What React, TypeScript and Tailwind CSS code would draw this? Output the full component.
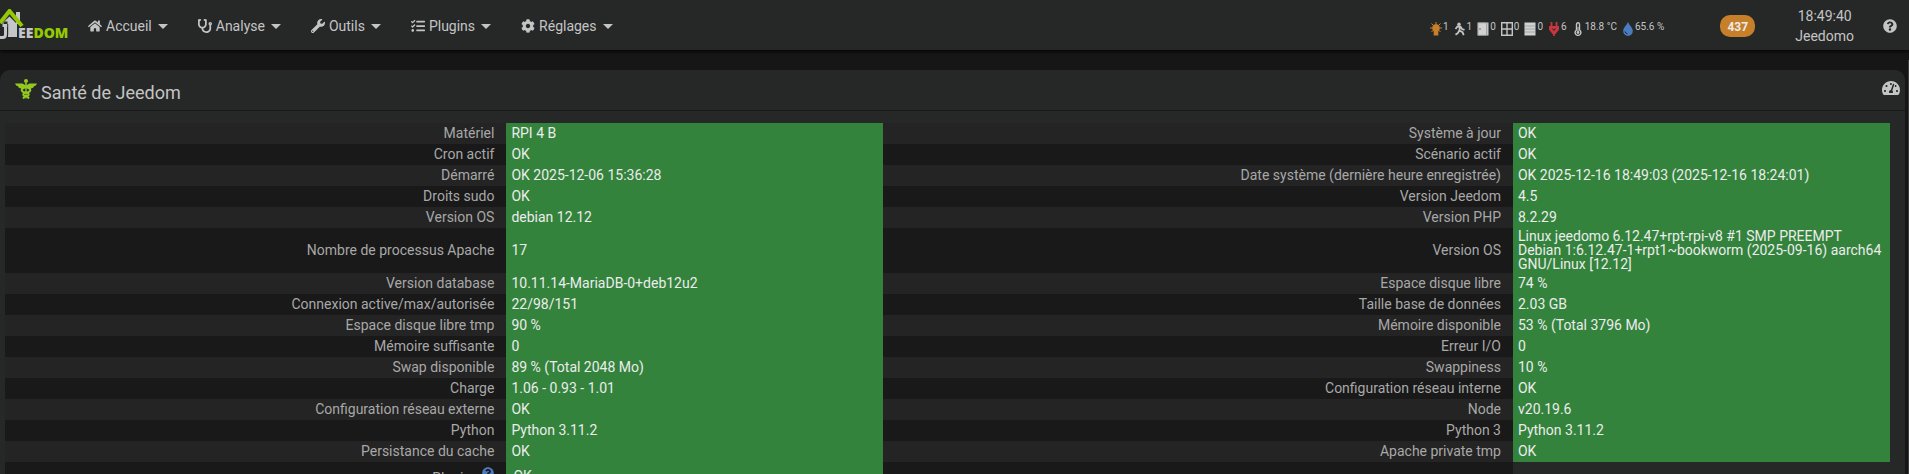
import type { ReactNode } from "react";
import type { IconType } from "react-icons";
import {
  FaCog,
  FaHome,
  FaQuestionCircle,
  FaStethoscope,
  FaTachometerAlt,
  FaTasks,
  FaWrench,
} from "react-icons/fa";

interface HealthItem {
  label: string;
  value: string;
}

const menu: { label: string; icon: IconType }[] = [
  { label: "Accueil", icon: FaHome },
  { label: "Analyse", icon: FaStethoscope },
  { label: "Outils", icon: FaWrench },
  { label: "Plugins", icon: FaTasks },
  { label: "Réglages", icon: FaCog },
];

const healthRows: [HealthItem, HealthItem][] = [
  [
    { label: "Matériel", value: "RPI 4 B" },
    { label: "Système à jour", value: "OK" },
  ],
  [
    { label: "Cron actif", value: "OK" },
    { label: "Scénario actif", value: "OK" },
  ],
  [
    { label: "Démarré", value: "OK 2025-12-06 15:36:28" },
    {
      label: "Date système (dernière heure enregistrée)",
      value: "OK 2025-12-16 18:49:03 (2025-12-16 18:24:01)",
    },
  ],
  [
    { label: "Droits sudo", value: "OK" },
    { label: "Version Jeedom", value: "4.5" },
  ],
  [
    { label: "Version OS", value: "debian 12.12" },
    { label: "Version PHP", value: "8.2.29" },
  ],
  [
    { label: "Nombre de processus Apache", value: "17" },
    {
      label: "Version OS",
      value:
        "Linux jeedomo 6.12.47+rpt-rpi-v8 #1 SMP PREEMPT Debian 1:6.12.47-1+rpt1~bookworm (2025-09-16) aarch64 GNU/Linux [12.12]",
    },
  ],
  [
    { label: "Version database", value: "10.11.14-MariaDB-0+deb12u2" },
    { label: "Espace disque libre", value: "74 %" },
  ],
  [
    { label: "Connexion active/max/autorisée", value: "22/98/151" },
    { label: "Taille base de données", value: "2.03 GB" },
  ],
  [
    { label: "Espace disque libre tmp", value: "90 %" },
    { label: "Mémoire disponible", value: "53 % (Total 3796 Mo)" },
  ],
  [
    { label: "Mémoire suffisante", value: "0" },
    { label: "Erreur I/O", value: "0" },
  ],
  [
    { label: "Swap disponible", value: "89 % (Total 2048 Mo)" },
    { label: "Swappiness", value: "10 %" },
  ],
  [
    { label: "Charge", value: "1.06 - 0.93 - 1.01" },
    { label: "Configuration réseau interne", value: "OK" },
  ],
  [
    { label: "Configuration réseau externe", value: "OK" },
    { label: "Node", value: "v20.19.6" },
  ],
  [
    { label: "Python", value: "Python 3.11.2" },
    { label: "Python 3", value: "Python 3.11.2" },
  ],
  [
    { label: "Persistance du cache", value: "OK" },
    { label: "Apache private tmp", value: "OK" },
  ],
];

function Logo() {
  return (
    <a href="#" aria-label="Jeedom" className="flex h-12 w-[73px] shrink-0 items-center pb-0.5">
      <svg viewBox="0 0 68 32" className="h-8 w-[68px]">
        <path d="M16 3h4v12h-4z" fill="#c4c6c8" />
        <path d="M2.500 14 9.500 7.500 17 15v13H8V18H2.500z" fill="#c4c6c8" />
        <path d="M5.500 15.500v10q0 3-3 3H0" fill="none" stroke="#c4c6c8" strokeWidth="3" />
        <path d="M7.700 15v11" stroke="#2b2d2d" strokeWidth="1" />
        <path d="M3.500 12.500h4v2.500h-4z" fill="#2b2d2d" />
        <path d="M0 14 9.500 2 22 17" fill="none" stroke="#94ca02" strokeWidth="4" />
        <text
          x="18"
          y="29"
          fontFamily="Open Sans"
          fontSize="14"
          fontWeight="800"
          fill="#c4c6c8"
        >
          EE<tspan fill="#94ca02">DOM</tspan>
        </text>
      </svg>
    </a>
  );
}

function Summary({ value, children }: { value: string; children: ReactNode }) {
  return (
    <span className="flex items-start gap-px whitespace-nowrap text-[10px] leading-[10px]">
      <svg viewBox="0 0 12 14" className="h-[14px] w-3">
        {children}
      </svg>
      {value}
    </span>
  );
}

function Summaries() {
  return (
    <div className="mr-[56px] flex items-center gap-[5px] pt-[5px] text-[#c4c4c4]">
      <Summary value="1">
        <path
          d="M6 2a4 4 0 0 1 2.300 7.200V13.500H3.700V9.200A4 4 0 0 1 6 2z"
          fill="#c87f2a"
        />
        <path
          d="M6 0v2M1.500 1.500l2 2M10.500 1.500l-2 2M0 6h2.500M9.500 6H12M1.500 10l2-2M10.500 10l-2-2"
          stroke="#c87f2a"
        />
      </Summary>
      <Summary value="1">
        <circle cx="5" cy="2.300" r="1.700" fill="currentColor" />
        <path
          d="M1.500 7 3.500 4.500l3 .2 1.500 2.300 2.500.8M5.700 5 5.500 8.500l3 1.700 1.200 3M5.300 8.500 4 11l-2.500 1.800"
          fill="none"
          stroke="currentColor"
          strokeWidth="1.800"
        />
      </Summary>
      <Summary value="0">
        <path d="M.5 .5h11v13H.5z" fill="#c4c4c4" />
        <path d="M1 .8h8.500v12.500H1z" fill="#d2d2d2" stroke="#8a8a8a" strokeWidth=".6" />
        <path d="M2 7h2" stroke="#8f5a40" />
      </Summary>
      <Summary value="0">
        <path d="M.7 .7h10.600v12.600H.7zM6 1v12M1 7h10" fill="none" stroke="currentColor" strokeWidth="1.400" />
      </Summary>
      <Summary value="0">
        <path d="M.5 .5h11v13H.5z" fill="#d0d0d0" />
        <path d="M1 4h10M1 7h10M1 10h10" stroke="#999" strokeWidth=".8" />
      </Summary>
      <Summary value="6">
        <path d="M3.500 0v5M8.500 0v5M6 9v5" fill="none" stroke="#c8373b" strokeWidth="1.800" />
        <path d="M1 4h10v3.500L7.500 12h-3L1 7.500z" fill="#c8373b" />
        <path d="M4.500 6.500 6 8.500l1.500-2" fill="none" stroke="#262828" />
      </Summary>
      <Summary value="18.8 °C">
        <path
          d="M4.500 8V2.200a1.500 1.500 0 0 1 3 0V8a2.900 2.900 0 1 1-3 0z"
          fill="none"
          stroke="currentColor"
          strokeWidth="1.400"
        />
        <circle cx="6" cy="10.500" r="1.400" fill="currentColor" />
        <path d="M6 5v5" stroke="currentColor" />
      </Summary>
      <Summary value="65.6 %">
        <path d="M6 0c1 3 4.800 5.500 4.800 9.200a4.800 4.800 0 0 1-9.600 0C1.200 5.500 5 3 6 0z" fill="#4b7cc0" />
        <path d="M3 9.500q.5 2 2.500 2.300" fill="none" stroke="#262828" />
      </Summary>
    </div>
  );
}

function Navbar() {
  return (
    <header className="z-10 flex h-[50px] shrink-0 items-center bg-[#262828] pt-0.5 pr-3 shadow-[0_1px_4px_#000000]">
      <Logo />
      <nav className="flex">
        {menu.map(({ label, icon: Icon }) => (
          <button key={label} type="button" className="flex h-12 items-center px-[15px]">
            <Icon className="h-[14px] w-auto" />
            <span className="ml-1 mr-[6px]">{label}</span>
            <span className="border-x-[5px] border-t-[5px] border-x-transparent" />
          </button>
        ))}
      </nav>
      <div className="ml-auto flex items-center">
        <Summaries />
        <button
          type="button"
          className="mr-[40px] flex h-[22px] w-[35px] items-center justify-center rounded-[10px] bg-[#c87f2a] pt-0.5 text-xs font-bold text-[#ececec]"
        >
          437
        </button>
        <div className="mr-[29px] text-center leading-5">
          <div>18:49:40</div>
          <div>Jeedomo</div>
        </div>
        <button type="button" aria-label="Aide">
          <FaQuestionCircle className="size-[14px]" />
        </button>
      </div>
    </header>
  );
}

function HealthIcon() {
  return (
    <svg viewBox="0 0 22 20" className="mb-0.5 h-5 w-[22px]" fill="#94ca20">
      <circle cx="11" cy="2" r="2" />
      <path d="M0 4.500h7.500L11 6.500l3.500-2H22q-1 2.500-3 2.700-.5 2-2.500 2-1 1.500-3 1L11 9l-2.500 1.200q-2 .5-3-1-2 0-2.500-2Q1 7 0 4.500z" />
      <path d="M10.200 4h1.600l-.3 15.500h-1z" />
      <path
        d="M8 9q-3 3 1 4.200l3.500.8q2.500 1.500 0 2.800l-2.500.7-2 2M14 9q3 3-1 4.200l-3.500.8q-2.500 1.500 0 2.800l2.500.7 2 2"
        fill="none"
        stroke="#94ca20"
        strokeWidth="2"
      />
    </svg>
  );
}

function HealthTable() {
  return (
    <table className="w-full table-fixed border-collapse leading-[14px]">
      <colgroup>
        <col className="w-[26.6%]" />
        <col className="w-[20%]" />
        <col className="w-[33.4%]" />
        <col className="w-[20%]" />
      </colgroup>
      <tbody>
        {healthRows.map(([left, right]) => (
          <tr key={left.label} className="h-[21px] odd:bg-[#242424] even:bg-[#191919]">
            <th className="pt-px pr-3 pb-0.5 text-right font-normal">{left.label}</th>
            <td className="bg-[#33833c] px-[5px] pt-px pb-0.5 text-[#ececec]">{left.value}</td>
            <th className="pt-px pr-3 pb-0.5 text-right font-normal">{right.label}</th>
            <td className="bg-[#33833c] px-[5px] pt-px pb-0.5 text-[#ececec]">{right.value}</td>
          </tr>
        ))}
        <tr className="h-7 bg-[#191919]">
          <th className="pr-3 text-right font-normal">
            <span className="inline-flex items-start gap-1">
              <span className="pt-1">Plugins</span>
              <FaQuestionCircle className="size-3 text-[#4b7cc0]" />
            </span>
          </th>
          <td className="bg-[#33833c] px-[7px] text-[#ececec]">OK</td>
          <td />
          <td className="bg-[#262828]" />
        </tr>
      </tbody>
    </table>
  );
}

export default function App() {
  return (
    <div className="flex h-screen flex-col overflow-hidden bg-[#161616] font-[Roboto,sans-serif] text-sm text-[#c4c4c4]">
      <Navbar />
      <main className="mt-[10px] min-h-0 flex-1 overflow-hidden border-r border-[#3c3c3c] pt-[10px] pr-[3px]">
        <section className="rounded-t-[10px] bg-[#262828]">
          <div className="flex h-[41px] items-center border-b border-[#191919] pr-[5px] pl-[15px]">
            <HealthIcon />
            <h1 className="ml-1 pt-[6px] text-lg">Santé de Jeedom</h1>
            <button type="button" aria-label="Tableau de bord" className="mb-1 ml-auto">
              <FaTachometerAlt className="h-[18px] w-auto" />
            </button>
          </div>
          <div className="pt-3 pr-[15px] pl-[5px] text-[#a8a8a8]">
            <HealthTable />
          </div>
        </section>
      </main>
    </div>
  );
}
